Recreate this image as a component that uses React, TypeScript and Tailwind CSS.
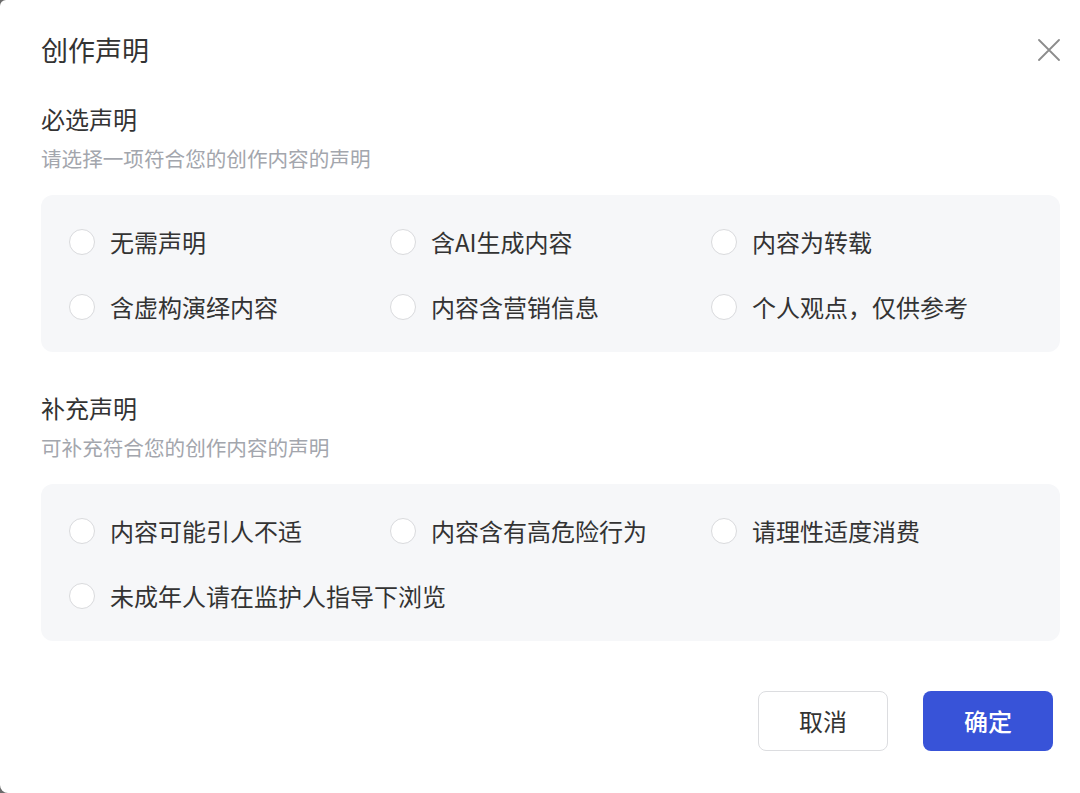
import React from "react";

const font = { fontFamily: '"Noto Sans CJK SC", "Noto Sans", sans-serif' };

function Radio({ label }: { label: string }) {
  return (
    <label className="flex items-center h-[40px] cursor-pointer whitespace-nowrap">
      <span className="w-[26px] h-[26px] rounded-full border border-[#d9dadd] bg-white shrink-0" />
      <span className="ml-[15px] text-[24px] leading-[40px] text-[#333333]">{label}</span>
    </label>
  );
}

function Section({
  title,
  desc,
  items,
  first,
}: {
  title: string;
  desc: string;
  items: string[];
  first?: boolean;
}) {
  return (
    <div className={first ? "mt-[36px]" : "mt-[41px]"}>
      <div className="text-[24px] leading-[30px] text-[#333333]">{title}</div>
      <div className="mt-[10px] text-[20.6px] leading-[28px] text-[#a3a6ad]">{desc}</div>
      <div className="mt-[23px] rounded-[12px] bg-[#f6f7f9] pl-[28px] pr-[28px] pt-[27px] pb-[25px]">
        <div className="grid grid-cols-3 gap-y-[25px]">
          {items.map((t) => (
            <Radio key={t} label={t} />
          ))}
        </div>
      </div>
    </div>
  );
}

export default function App() {
  return (
    <div className="w-[1080px] h-[793px] bg-[#6b6b6b] overflow-hidden" style={font}>
      <div className="w-full h-full bg-white rounded-tl-[6px] rounded-bl-[8px] pl-[41px] pr-[20px] pt-[32px]">
        <div className="flex items-center justify-between h-[36px]">
          <div className="text-[27px] leading-[36px] text-[#333333]">创作声明</div>
          <svg width="22" height="22" viewBox="0 0 22 22">
            <path d="M1 1 L21 21 M21 1 L1 21" stroke="#8c8c8c" strokeWidth="1.8" strokeLinecap="round" />
          </svg>
        </div>
        <Section
          first
          title="必选声明"
          desc="请选择一项符合您的创作内容的声明"
          items={["无需声明", "含AI生成内容", "内容为转载", "含虚构演绎内容", "内容含营销信息", "个人观点，仅供参考"]}
        />
        <Section
          title="补充声明"
          desc="可补充符合您的创作内容的声明"
          items={["内容可能引人不适", "内容含有高危险行为", "请理性适度消费", "未成年人请在监护人指导下浏览"]}
        />
        <div className="mt-[50px] flex justify-end gap-[35px] pr-[7px]">
          <button className="w-[130px] h-[60px] rounded-[8px] border border-[#dcdde0] bg-white text-[24px] text-[#333333]">
            取消
          </button>
          <button className="w-[130px] h-[60px] rounded-[8px] bg-[#3853d8] text-[24px] text-white font-medium">
            确定
          </button>
        </div>
      </div>
    </div>
  );
}
